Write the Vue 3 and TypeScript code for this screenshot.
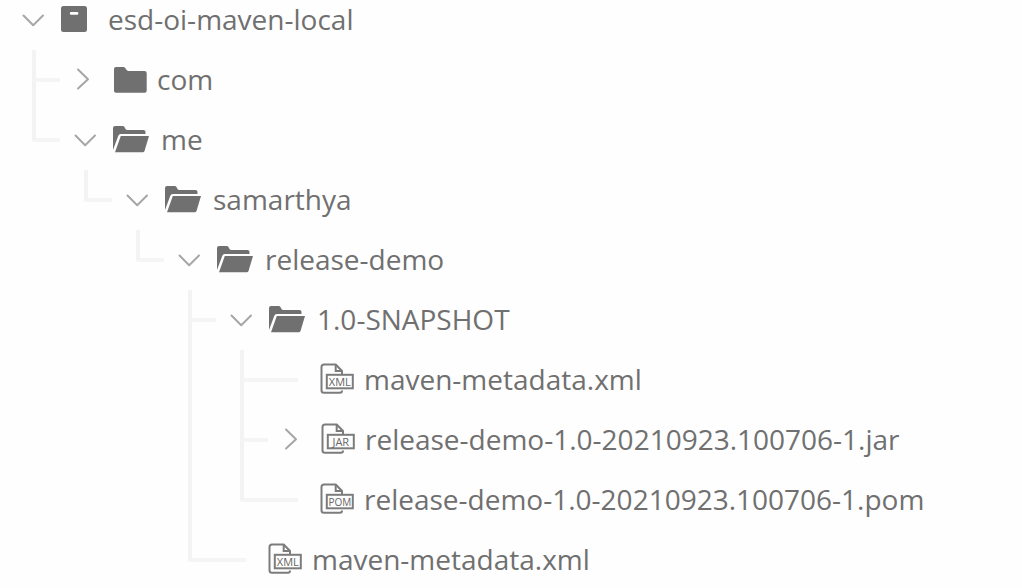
<script setup lang="ts">
import { computed, ref } from 'vue'

type Kind = 'repo' | 'folder' | 'file' | 'archive'
type Guide = 'blank' | 'pass' | 'tee' | 'corner'

interface TreeNode {
  id: string
  name: string
  kind: Kind
  badge?: string
  children?: TreeNode[]
}

interface Row {
  node: TreeNode
  level: number
  guides: Guide[]
  expandable: boolean
  open: boolean
}

const root: TreeNode = {
  id: 'root',
  name: 'esd-oi-maven-local',
  kind: 'repo',
  children: [
    { id: 'com', name: 'com', kind: 'folder', children: [] },
    {
      id: 'me',
      name: 'me',
      kind: 'folder',
      children: [
        {
          id: 'samarthya',
          name: 'samarthya',
          kind: 'folder',
          children: [
            {
              id: 'release-demo',
              name: 'release-demo',
              kind: 'folder',
              children: [
                {
                  id: 'snapshot',
                  name: '1.0-SNAPSHOT',
                  kind: 'folder',
                  children: [
                    { id: 'snapshot-xml', name: 'maven-metadata.xml', kind: 'file', badge: 'XML' },
                    {
                      id: 'jar',
                      name: 'release-demo-1.0-20210923.100706-1.jar',
                      kind: 'archive',
                      badge: 'JAR',
                      children: [],
                    },
                    {
                      id: 'pom',
                      name: 'release-demo-1.0-20210923.100706-1.pom',
                      kind: 'file',
                      badge: 'POM',
                    },
                  ],
                },
                { id: 'demo-xml', name: 'maven-metadata.xml', kind: 'file', badge: 'XML' },
              ],
            },
          ],
        },
      ],
    },
  ],
}

const expanded = ref(new Set<string>(['root', 'me', 'samarthya', 'release-demo', 'snapshot']))

function toggle(id: string): void {
  const next = new Set(expanded.value)
  if (!next.delete(id)) next.add(id)
  expanded.value = next
}

function flatten(node: TreeNode, inherited: Guide[], own: Guide | null): Row[] {
  const open = expanded.value.has(node.id)
  const guides = own ? [...inherited, own] : inherited
  const rows: Row[] = [
    { node, level: guides.length + 1, guides, expandable: node.children !== undefined, open },
  ]
  if (open && node.children) {
    const passed: Guide[] = own ? [...inherited, own === 'tee' ? 'pass' : 'blank'] : []
    const last = node.children.length - 1
    node.children.forEach((child, i) => {
      rows.push(...flatten(child, passed, i === last ? 'corner' : 'tee'))
    })
  }
  return rows
}

const rows = computed(() => flatten(root, [], null))
</script>

<template>
  <main class="browser">
    <ul class="tree" role="tree" aria-label="Repository">
      <li
        v-for="row in rows"
        :key="row.node.id"
        class="row"
        :class="{ top: row.level === 1, leaf: !row.expandable }"
        role="treeitem"
        :aria-level="row.level"
        :aria-expanded="row.expandable ? row.open : undefined"
      >
        <span v-for="(guide, i) in row.guides" :key="i" class="guide" :class="guide"></span>

        <button
          v-if="row.expandable"
          type="button"
          class="toggle"
          :aria-label="`Toggle ${row.node.name}`"
          @click="toggle(row.node.id)"
        >
          <svg v-if="row.open" width="24" height="24" viewBox="0 0 24 24">
            <path d="M2.5 7.500 12.200 17.200 22 7.500" />
          </svg>
          <svg v-else width="24" height="24" viewBox="0 0 24 24">
            <path d="M5 1.500 15 11.200 5 20.500" />
          </svg>
        </button>

        <svg v-if="row.node.kind === 'repo'" class="icon wide" width="35" height="28" viewBox="0 0 35 28">
          <path
            fill-rule="evenodd"
            d="M2.5 0h21A2.5 2.5 0 0 1 26 2.500v21a2.500 2.500 0 0 1-2.500 2.500h-21A2.500 2.500 0 0 1 0 23.500v-21A2.500 2.500 0 0 1 2.500 0zM10.200 6a1.400 1.400 0 0 0 0 2.800h5.800a1.400 1.400 0 0 0 0-2.800z"
          />
        </svg>
        <svg
          v-else-if="row.node.kind === 'folder' && row.open"
          class="icon wide"
          width="36"
          height="28"
          viewBox="0 0 36 28"
        >
          <path
            d="M0 24V2Q0 0 2 0H9.500Q11 0 11.600 1.300L12.500 3Q13 4 14.500 4H30.500Q32.500 4 32.500 6V8H7.500Q6 8 5.400 9.500Z"
          />
          <path d="M7.800 10H36L31.500 25Q31 26.300 29.800 26.300H2Z" />
        </svg>
        <svg
          v-else-if="row.node.kind === 'folder'"
          class="icon narrow"
          width="36"
          height="28"
          viewBox="0 0 36 28"
        >
          <path
            d="M1 3Q1 1 3 1H10.500Q12 1 12.600 2.500L13 3.300Q13.800 5 15.500 5H31.500Q33.700 5 33.700 7V24.800Q33.700 26.800 31.700 26.800H3Q1 26.800 1 24.800Z"
          />
        </svg>
        <svg v-else class="icon file" width="34" height="34" viewBox="0 0 34 34">
          <path
            class="line"
            d="M22 27.500Q22 29.800 20 29.800H4Q1.500 29.800 1.500 27.300V4Q1.500 1.500 4 1.500H15.700L22 8V11"
          />
          <path class="line" d="M15.700 1.500V8H22" />
          <rect class="line" x="6.800" y="11.800" width="26" height="13.500" />
          <text x="19.800" y="22.600" text-anchor="middle" :class="row.node.badge?.toLowerCase()">
            {{ row.node.badge }}
          </text>
        </svg>

        <span class="name">{{ row.node.name }}</span>
      </li>
    </ul>
  </main>
</template>

<style>
body {
  margin: 0;
  background: #fefefe;
}
</style>

<style scoped>
.browser {
  height: 100vh;
  overflow: hidden;
  font-family: 'Open Sans', 'Noto Sans', sans-serif;
  font-size: 28px;
  line-height: 40px;
  color: #707070;
}

.tree {
  margin: 0;
  padding: 0;
  list-style: none;
}

.row {
  display: flex;
  align-items: center;
  height: 60px;
  padding-left: 32px;
  white-space: nowrap;
}

.row.top {
  height: 40px;
  padding: 0 0 10px 8px;
}

.name {
  padding-bottom: 2px;
}

.guide {
  display: flex;
  flex: none;
  flex-direction: column;
  align-self: stretch;
  box-sizing: border-box;
  width: 52px;
}

.guide.pass {
  border-left: 4px solid #f3f3f3;
}

.guide.tee,
.guide.corner {
  width: 28px;
}

.leaf .guide.tee,
.leaf .guide.corner {
  width: 58px;
  margin-right: 22px;
}

.guide.tee::before,
.guide.corner::before {
  content: '';
  box-sizing: border-box;
  height: 32px;
  border-bottom: 4px solid #f5f5f5;
  border-left: 4px solid #f3f3f3;
}

.guide.corner::before {
  border-bottom-left-radius: 3px;
}

.guide.tee::after {
  content: '';
  flex: 1;
  border-left: 4px solid #f3f3f3;
}

.toggle {
  display: flex;
  flex: none;
  align-items: center;
  justify-content: center;
  width: 50px;
  height: 40px;
  margin: 0 3px 0 0;
  padding: 0;
  border: 0;
  background: none;
  cursor: pointer;
}

.toggle path {
  fill: none;
  stroke: #a6a6a6;
  stroke-width: 2;
  stroke-linecap: round;
  stroke-linejoin: round;
}

.icon {
  flex: none;
  fill: #707070;
}

.wide {
  margin-right: 12px;
}

.narrow {
  margin-right: 8px;
}

.file {
  margin-right: 10px;
}

.line {
  fill: none;
  stroke: #7c7c7c;
  stroke-width: 2;
}

.icon text {
  font-size: 11px;
  fill: #666666;
}

.icon text.pom {
  font-size: 10px;
}
</style>
